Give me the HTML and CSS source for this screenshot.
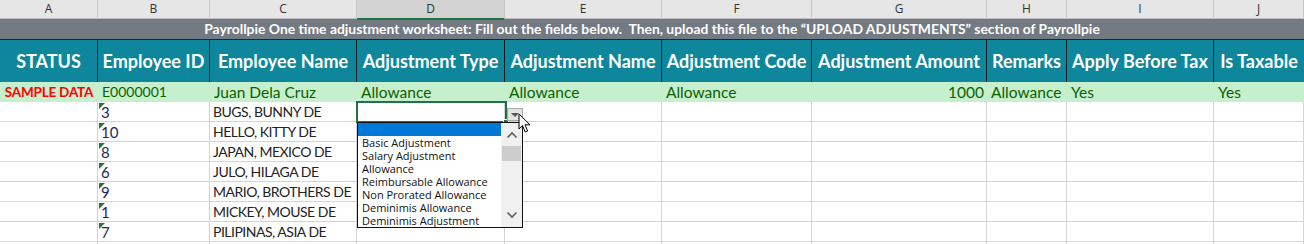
FILE: index.html
```html
<!DOCTYPE html>
<html lang="en">
<head>
  <meta charset="UTF-8" />
  <title>Payrollpie One time adjustment worksheet</title>
  <link rel="stylesheet" href="styles.css">
</head>
<body>
  <div class="sheet">
    <div class="row col-heads">
      <div>A</div><div>B</div><div>C</div><div class="active">D</div><div>E</div>
      <div>F</div><div>G</div><div>H</div><div>I</div><div>J</div>
    </div>

    <div class="title">Payrollpie One time adjustment worksheet: Fill out the fields below.&nbsp; Then, upload this file to the “UPLOAD ADJUSTMENTS” section of Payrollpie</div>

    <div class="row head">
      <div>STATUS</div>
      <div>Employee ID</div>
      <div>Employee Name</div>
      <div>Adjustment Type</div>
      <div>Adjustment Name</div>
      <div>Adjustment Code</div>
      <div>Adjustment Amount</div>
      <div>Remarks</div>
      <div>Apply Before Tax</div>
      <div>Is Taxable</div>
    </div>

    <div class="row sample">
      <div class="status">SAMPLE DATA</div>
      <div class="emp-id">E0000001</div>
      <div>Juan Dela Cruz</div>
      <div>Allowance</div>
      <div>Allowance</div>
      <div>Allowance</div>
      <div class="num">1000</div>
      <div>Allowance</div>
      <div>Yes</div>
      <div>Yes</div>
    </div>

    <div class="row data">
      <div></div><div class="id">3</div><div class="name">BUGS, BUNNY DE</div>
      <div></div><div></div><div></div><div></div><div></div><div></div><div></div>
    </div>
    <div class="row data">
      <div></div><div class="id">10</div><div class="name">HELLO, KITTY DE</div>
      <div></div><div></div><div></div><div></div><div></div><div></div><div></div>
    </div>
    <div class="row data">
      <div></div><div class="id">8</div><div class="name">JAPAN, MEXICO DE</div>
      <div></div><div></div><div></div><div></div><div></div><div></div><div></div>
    </div>
    <div class="row data">
      <div></div><div class="id">6</div><div class="name">JULO, HILAGA DE</div>
      <div></div><div></div><div></div><div></div><div></div><div></div><div></div>
    </div>
    <div class="row data">
      <div></div><div class="id">9</div><div class="name">MARIO, BROTHERS DE</div>
      <div></div><div></div><div></div><div></div><div></div><div></div><div></div>
    </div>
    <div class="row data">
      <div></div><div class="id">1</div><div class="name">MICKEY, MOUSE DE</div>
      <div></div><div></div><div></div><div></div><div></div><div></div><div></div>
    </div>
    <div class="row data">
      <div></div><div class="id">7</div><div class="name">PILIPINAS, ASIA DE</div>
      <div></div><div></div><div></div><div></div><div></div><div></div><div></div>
    </div>
    <div class="row data">
      <div></div><div class="id blank"></div><div></div>
      <div></div><div></div><div></div><div></div><div></div><div></div><div></div>
    </div>

    <!-- active cell + data validation dropdown -->
    <div class="selection"><span class="handle"></span></div>
    <div class="dv-btn"><span class="tri"></span></div>
    <div class="dv-list">
      <div class="items">
        <div class="item picked">&nbsp;</div>
        <div class="item">Basic Adjustment</div>
        <div class="item">Salary Adjustment</div>
        <div class="item">Allowance</div>
        <div class="item">Reimbursable Allowance</div>
        <div class="item">Non Prorated Allowance</div>
        <div class="item">Deminimis Allowance</div>
        <div class="item">Deminimis Adjustment</div>
      </div>
      <div class="scroll">
        <svg class="chev" width="12" height="8" viewBox="0 0 12 8"><path d="M1.5 6.5 L6 2 L10.5 6.5" fill="none" stroke="#606060" stroke-width="1.6"/></svg>
        <div class="thumb"></div>
        <svg class="chev down" width="12" height="8" viewBox="0 0 12 8"><path d="M1.5 1.5 L6 6 L10.5 1.5" fill="none" stroke="#606060" stroke-width="1.6"/></svg>
      </div>
    </div>
    <svg class="cursor" width="14" height="21" viewBox="0 0 14 21">
      <path d="M1 1 L1 16 L4.5 12.6 L7.2 19 L9.6 18 L7 11.8 L12 11.8 Z" fill="#fff" stroke="#000" stroke-width="1" stroke-linejoin="round"/>
    </svg>
  </div>
</body>
</html>
```

FILE: styles.css
```css
* {
  box-sizing: border-box;
}

body {
  margin: 0;
  background-color: #ffffff;
  font-family: Lato, "Open Sans", sans-serif;
  overflow: hidden;
}

.sheet {
  position: relative;
  width: 1304px;
  height: 244px;
  overflow: hidden;
}

.row {
  display: grid;
  grid-template-columns: 98px 112px 147px 148px 157px 150px 175px 80px 147px 90px;
}

.row > div {
  min-width: 0;
}

/* column letters */
.col-heads {
  height: 19px;
  background-color: #e6e6e6;
  border-bottom: 1px solid #bdbdbd;
}

.col-heads div {
  border-right: 1px solid #c8c8c8;
  text-align: center;
  font-family: "Open Sans", sans-serif;
  font-size: 12px;
  line-height: 18px;
  color: #333;
}

.col-heads .active {
  background-color: #d2d2d2;
  border-bottom: 2px solid #217346;
  margin-bottom: -1px;
  color: #23392c;
}

.title {
  height: 20px;
  background-color: #737a82;
  color: #ffffff;
  font-weight: bold;
  font-size: 13.9px;
  line-height: 20px;
  text-align: center;
  white-space: nowrap;
}

.head {
  height: 43px;
  background-color: #0e869b;
  border-top: 1px solid #1c2a30;
}

.head div {
  border-right: 1px solid #0d1a1e;
  color: #ffffff;
  font-weight: bold;
  font-size: 18px;
  line-height: 43px;
  text-align: center;
  white-space: nowrap;
  overflow: hidden;
}

.head div:last-child {
  border-right: none;
}

.sample {
  height: 20px;
  background-color: #c6efce;
}

.sample div {
  padding-left: 4px;
  font-size: 15.5px;
  line-height: 20px;
  color: #0b6100;
  white-space: nowrap;
}

.sample .status {
  padding-left: 0;
  text-align: center;
  font-size: 13.5px;
  color: #ff0000;
  font-weight: bold;
  letter-spacing: -0.2px;
}

.sample .emp-id {
  font-size: 14px;
}

.sample .num {
  text-align: right;
  padding-right: 3px;
}

.data {
  height: 20px;
  border-bottom: 1px solid #d4d4d4;
}

.data div {
  position: relative;
  border-right: 1px solid #d4d4d4;
  padding-left: 3px;
  font-size: 15px;
  line-height: 20px;
  color: #222;
  white-space: nowrap;
}

.data .name {
  font-size: 14px;
  letter-spacing: -0.5px;
}

.data .id {
  color: #262660;
}

/* green "number stored as text" marker */
.data .id::before {
  content: "";
  position: absolute;
  left: 1px;
  top: 1px;
  border-top: 6px solid #1b7a33;
  border-right: 6px solid transparent;
}

.data .blank::before {
  display: none;
}

.selection {
  position: absolute;
  left: 356px;
  top: 101px;
  width: 151px;
  height: 22px;
  border: 2px solid #217346;
}

.handle {
  position: absolute;
  right: -4px;
  bottom: -4px;
  width: 6px;
  height: 6px;
  background-color: #217346;
  border: 1px solid #fff;
}

.dv-btn {
  position: absolute;
  left: 507px;
  top: 108px;
  width: 16px;
  height: 13px;
  background-color: #e3e3e3;
  border: 1px solid #a9a9a9;
  display: flex;
  justify-content: center;
  align-items: center;
}

.tri {
  border-top: 4px solid #555;
  border-left: 4px solid transparent;
  border-right: 4px solid transparent;
}

.dv-list {
  position: absolute;
  left: 357px;
  top: 122px;
  width: 166px;
  height: 106px;
  background-color: #ffffff;
  border: 1px solid #111;
  display: flex;
}

.items {
  flex: 1;
  font-family: "Open Sans", sans-serif;
  font-size: 11px;
  color: #111;
}

.item {
  height: 13px;
  line-height: 13px;
  padding-left: 4px;
  white-space: nowrap;
}

.item.picked {
  background-color: #0078d7;
}

.scroll {
  width: 21px;
  background-color: #f0f0f0;
  display: flex;
  flex-direction: column;
  align-items: center;
}

.chev {
  margin-top: 8px;
}

.chev.down {
  margin-top: auto;
  margin-bottom: 8px;
}

.thumb {
  width: 19px;
  height: 15px;
  margin-top: 7px;
  background-color: #cdcdcd;
}

.cursor {
  position: absolute;
  left: 518px;
  top: 113px;
}
```
